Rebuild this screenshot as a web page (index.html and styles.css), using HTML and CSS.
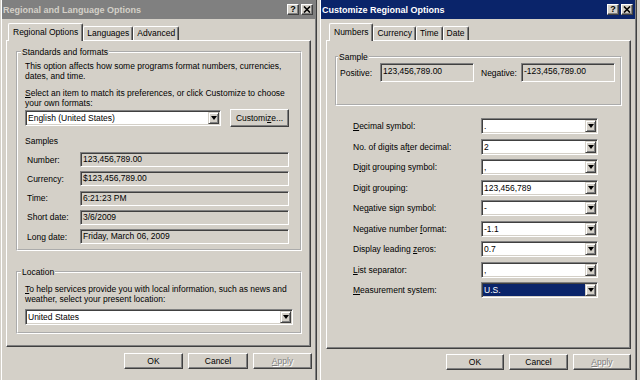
FILE: index.html
```html
<!DOCTYPE html>
<html lang="en">
  <head>
    <meta charset="UTF-8" />
    <meta name="viewport" content="width=device-width, initial-scale=1.0" />
    <title>Regional and Language Options</title>
    <link rel="stylesheet" href="styles.css">
  </head>
  <body>
    <div class="window regional">
      <div class="title-bar inactive">
        <span class="title">Regional and Language Options</span>
        <span class="title-buttons">
          <span class="title-btn">?</span>
          <span class="title-btn">
            <svg width="8" height="7" viewBox="0 0 8 7"><path d="M1 0.5 L7 6.5 M7 0.5 L1 6.5" stroke="#000" stroke-width="1.6" /></svg>
          </span>
        </span>
      </div>
      <div class="window-body">
        <div class="tabs">
          <div class="tab active">Regional Options</div>
          <div class="tab">Languages</div>
          <div class="tab">Advanced</div>
        </div>
        <div class="panel">
          <fieldset class="group standards">
            <legend>Standards and formats</legend>
            <p>This option affects how some programs format numbers, currencies,<br />dates, and time.</p>
            <p class="gap"><u>S</u>elect an item to match its preferences, or click Customize to choose<br />your own formats:</p>
            <div class="combo-row">
              <div class="combo wide">
                <span class="combo-value">English (United States)</span>
                <span class="combo-arrow"></span>
              </div>
              <button class="btn customize-btn">Customi<u>z</u>e...</button>
            </div>
            <div class="samples-title">Samples</div>
            <div class="samples">
              <span class="label">Number:</span>
              <span class="field">123,456,789.00</span>
              <span class="label">Currency:</span>
              <span class="field">$123,456,789.00</span>
              <span class="label">Time:</span>
              <span class="field">6:21:23 PM</span>
              <span class="label">Short date:</span>
              <span class="field">3/6/2009</span>
              <span class="label">Long date:</span>
              <span class="field">Friday, March 06, 2009</span>
            </div>
          </fieldset>
          <fieldset class="group location">
            <legend>Location</legend>
            <p><u>T</u>o help services provide you with local information, such as news and<br />weather, select your present location:</p>
            <div class="combo full">
              <span class="combo-value">United States</span>
              <span class="combo-arrow"></span>
            </div>
          </fieldset>
        </div>
        <div class="dialog-buttons">
          <button class="btn w59">OK</button>
          <button class="btn w60">Cancel</button>
          <button class="btn w59 disabled"><u>A</u>pply</button>
        </div>
      </div>
    </div>

    <div class="window customize">
      <div class="title-bar active">
        <span class="title">Customize Regional Options</span>
        <span class="title-buttons">
          <span class="title-btn">?</span>
          <span class="title-btn">
            <svg width="8" height="7" viewBox="0 0 8 7"><path d="M1 0.5 L7 6.5 M7 0.5 L1 6.5" stroke="#000" stroke-width="1.6" /></svg>
          </span>
        </span>
      </div>
      <div class="window-body">
        <div class="tabs">
          <div class="tab active">Numbers</div>
          <div class="tab">Currency</div>
          <div class="tab">Time</div>
          <div class="tab">Date</div>
        </div>
        <div class="panel">
          <fieldset class="group sample">
            <legend>Sample</legend>
            <div class="sample-row">
              <span class="sample-label">Positive:</span>
              <span class="field tall">123,456,789.00</span>
              <span class="sample-label negative">Negative:</span>
              <span class="field tall">-123,456,789.00</span>
            </div>
          </fieldset>
          <div class="settings">
            <span class="label"><u>D</u>ecimal symbol:</span>
            <div class="combo"><span class="combo-value">.</span><span class="combo-arrow"></span></div>
            <span class="label">No. of digits af<u>t</u>er decimal:</span>
            <div class="combo"><span class="combo-value">2</span><span class="combo-arrow"></span></div>
            <span class="label">D<u>i</u>git grouping symbol:</span>
            <div class="combo"><span class="combo-value">,</span><span class="combo-arrow"></span></div>
            <span class="label">Di<u>g</u>it grouping:</span>
            <div class="combo"><span class="combo-value">123,456,789</span><span class="combo-arrow"></span></div>
            <span class="label">Ne<u>g</u>ative sign symbol:</span>
            <div class="combo"><span class="combo-value">-</span><span class="combo-arrow"></span></div>
            <span class="label">Negative number <u>f</u>ormat:</span>
            <div class="combo"><span class="combo-value">-1.1</span><span class="combo-arrow"></span></div>
            <span class="label">Display leading <u>z</u>eros:</span>
            <div class="combo"><span class="combo-value">0.7</span><span class="combo-arrow"></span></div>
            <span class="label"><u>L</u>ist separator:</span>
            <div class="combo"><span class="combo-value">,</span><span class="combo-arrow"></span></div>
            <span class="label"><u>M</u>easurement system:</span>
            <div class="combo"><span class="combo-value selected">U.S.</span><span class="combo-arrow"></span></div>
          </div>
        </div>
        <div class="dialog-buttons">
          <button class="btn w58">OK</button>
          <button class="btn w59">Cancel</button>
          <button class="btn w58 disabled"><u>A</u>pply</button>
        </div>
      </div>
    </div>
  </body>
</html>
```

FILE: styles.css
```css
/* Reset some default styles */
body,
div,
span,
p,
fieldset,
legend,
button {
  margin: 0;
  padding: 0;
  box-sizing: border-box;
}

body {
  font-family: "Liberation Sans", Arial, sans-serif;
  font-size: 8.5px;
  line-height: 10px;
  color: #000;
  background-color: #d4d0c8;
  display: flex;
  gap: 2px;
  width: 640px;
  height: 380px;
  overflow: hidden;
}

p {
  white-space: nowrap;
}

/* window frame */
.window {
  flex: none;
  height: 392px;
  margin-top: -2px;
  padding: 1px;
  background-color: #d4d0c8;
  border: 1px solid;
  border-color: #d4d0c8 #404040 #404040 #d4d0c8;
  box-shadow: inset 1px 1px #fff, inset -1px -1px #808080;
}

.window.regional {
  width: 317px;
}

.window.customize {
  width: 318px;
}

.title-bar {
  height: 19px;
  display: flex;
  align-items: center;
  justify-content: space-between;
  padding: 0 2px 0 1px;
  font-size: 9px;
  font-weight: bold;
}

.title-bar.inactive {
  background-color: #808080;
  color: #d4d0c8;
}

.title-bar.active {
  background-color: #0a246a;
  color: #fff;
}

.title-buttons {
  display: flex;
  gap: 2px;
}

.title-btn {
  width: 12px;
  height: 11px;
  display: flex;
  align-items: center;
  justify-content: center;
  background-color: #d4d0c8;
  color: #000;
  font-size: 9px;
  line-height: 9px;
  border: 1px solid;
  border-color: #fff #404040 #404040 #fff;
  box-shadow: inset -1px -1px #808080;
}

.window-body {
  padding: 4px 4px 0 4px;
}

.customize .window-body {
  padding-left: 5px;
}

/* tabs */
.tabs {
  display: flex;
  align-items: flex-end;
  height: 17px;
  padding-left: 2px;
  position: relative;
  z-index: 1;
}

.customize .tabs {
  padding-left: 3px;
}

.tab {
  height: 14px;
  padding: 1px 3px 0 3px;
  background-color: #d4d0c8;
  border: 1px solid;
  border-bottom: none;
  border-color: #fff #404040 #fff #fff;
  border-radius: 2px 2px 0 0;
  box-shadow: inset -1px 0 #808080;
  white-space: nowrap;
}

.tab.active {
  height: 18px;
  margin-bottom: -1px;
  padding: 3px 4px 0 4px;
}

.panel {
  border: 1px solid;
  border-color: #fff #404040 #404040 #fff;
  box-shadow: inset -1px -1px #808080;
  padding: 0 8px 0 9px;
}

.regional .panel {
  height: 307px;
}

.customize .panel {
  height: 309px;
  padding: 0 8px;
}

/* group boxes */
.group {
  border: 2px groove #fff;
  min-width: 0;
}

.group legend {
  padding: 0 1px;
  margin-left: -4px;
  line-height: 10px;
}

.standards {
  margin-top: 6px;
  padding: 4px 11px 5px 7px;
}

.standards .gap {
  margin-top: 7px;
}

.combo-row {
  display: flex;
  align-items: center;
  height: 18px;
  margin-top: 1px;
}

.samples-title {
  margin-top: 9px;
}

.samples {
  display: grid;
  grid-template-columns: 55px 209px;
  grid-auto-rows: 15px;
  row-gap: 4.25px;
  align-items: center;
  margin-top: 6px;
}

.samples .label {
  padding-left: 2px;
}

.location {
  margin-top: 16px;
  padding: 7px 7px 7px 7px;
}

.location .combo {
  margin-top: 5px;
}

/* read-only fields */
.field {
  height: 15px;
  line-height: 13px;
  padding-left: 2px;
  white-space: nowrap;
  overflow: hidden;
  background-color: #d4d0c8;
  border: 1px solid;
  border-color: #808080 #fff #fff #808080;
  box-shadow: inset 1px 1px #404040, inset -1px -1px #d4d0c8;
}

.field.tall {
  width: 94px;
  height: 19px;
  line-height: 10px;
  padding-top: 2px;
}

/* combo boxes */
.combo {
  display: flex;
  height: 16px;
  padding: 1px;
  background-color: #fff;
  border: 1px solid;
  border-color: #808080 #fff #fff #808080;
  box-shadow: inset 1px 1px #404040, inset -1px -1px #d4d0c8;
}

.combo.wide {
  width: 196px;
}

.combo-value {
  flex: 1;
  padding-left: 1px;
  line-height: 12px;
  white-space: nowrap;
  overflow: hidden;
}

.combo-value.selected {
  background-color: #0a246a;
  color: #fff;
}

.combo-arrow {
  flex: none;
  width: 11px;
  display: flex;
  align-items: center;
  justify-content: center;
  background-color: #d4d0c8;
  border: 1px solid;
  border-color: #d4d0c8 #404040 #404040 #d4d0c8;
  box-shadow: inset 1px 1px #fff, inset -1px -1px #808080;
}

.combo-arrow::after {
  content: "";
  border-style: solid;
  border-width: 4px 3.5px 0 3.5px;
  border-color: #000 transparent transparent transparent;
}

/* buttons */
.btn {
  font: inherit;
  height: 16px;
  line-height: 12px;
  color: #000;
  background-color: #d4d0c8;
  border: 1px solid;
  border-color: #fff #404040 #404040 #fff;
  box-shadow: inset -1px -1px #808080;
}

.btn.disabled {
  color: #808080;
  text-shadow: 1px 1px #fff;
}

.customize-btn {
  width: 59px;
  height: 18px;
  margin-left: 9px;
}

.w58 {
  width: 58px;
}

.w59 {
  width: 59px;
}

.w60 {
  width: 60px;
}

.dialog-buttons {
  display: flex;
  justify-content: flex-end;
  gap: 5px;
  margin: 6px -1px 0 0;
}

.customize .dialog-buttons {
  margin: 5px 0 0 0;
}

/* customize dialog */
.sample {
  margin-top: 11px;
  padding: 1px 3px 22px 3px;
}

.sample legend {
  margin-left: -2px;
}

.sample-row {
  display: flex;
  align-items: center;
}

.sample-label {
  width: 40px;
}

.sample-label.negative {
  margin-left: 7px;
}

.settings {
  display: grid;
  grid-template-columns: 128px 117px;
  grid-auto-rows: 16px;
  row-gap: 4.5px;
  align-items: center;
  margin: 12px 0 0 18px;
}
```
